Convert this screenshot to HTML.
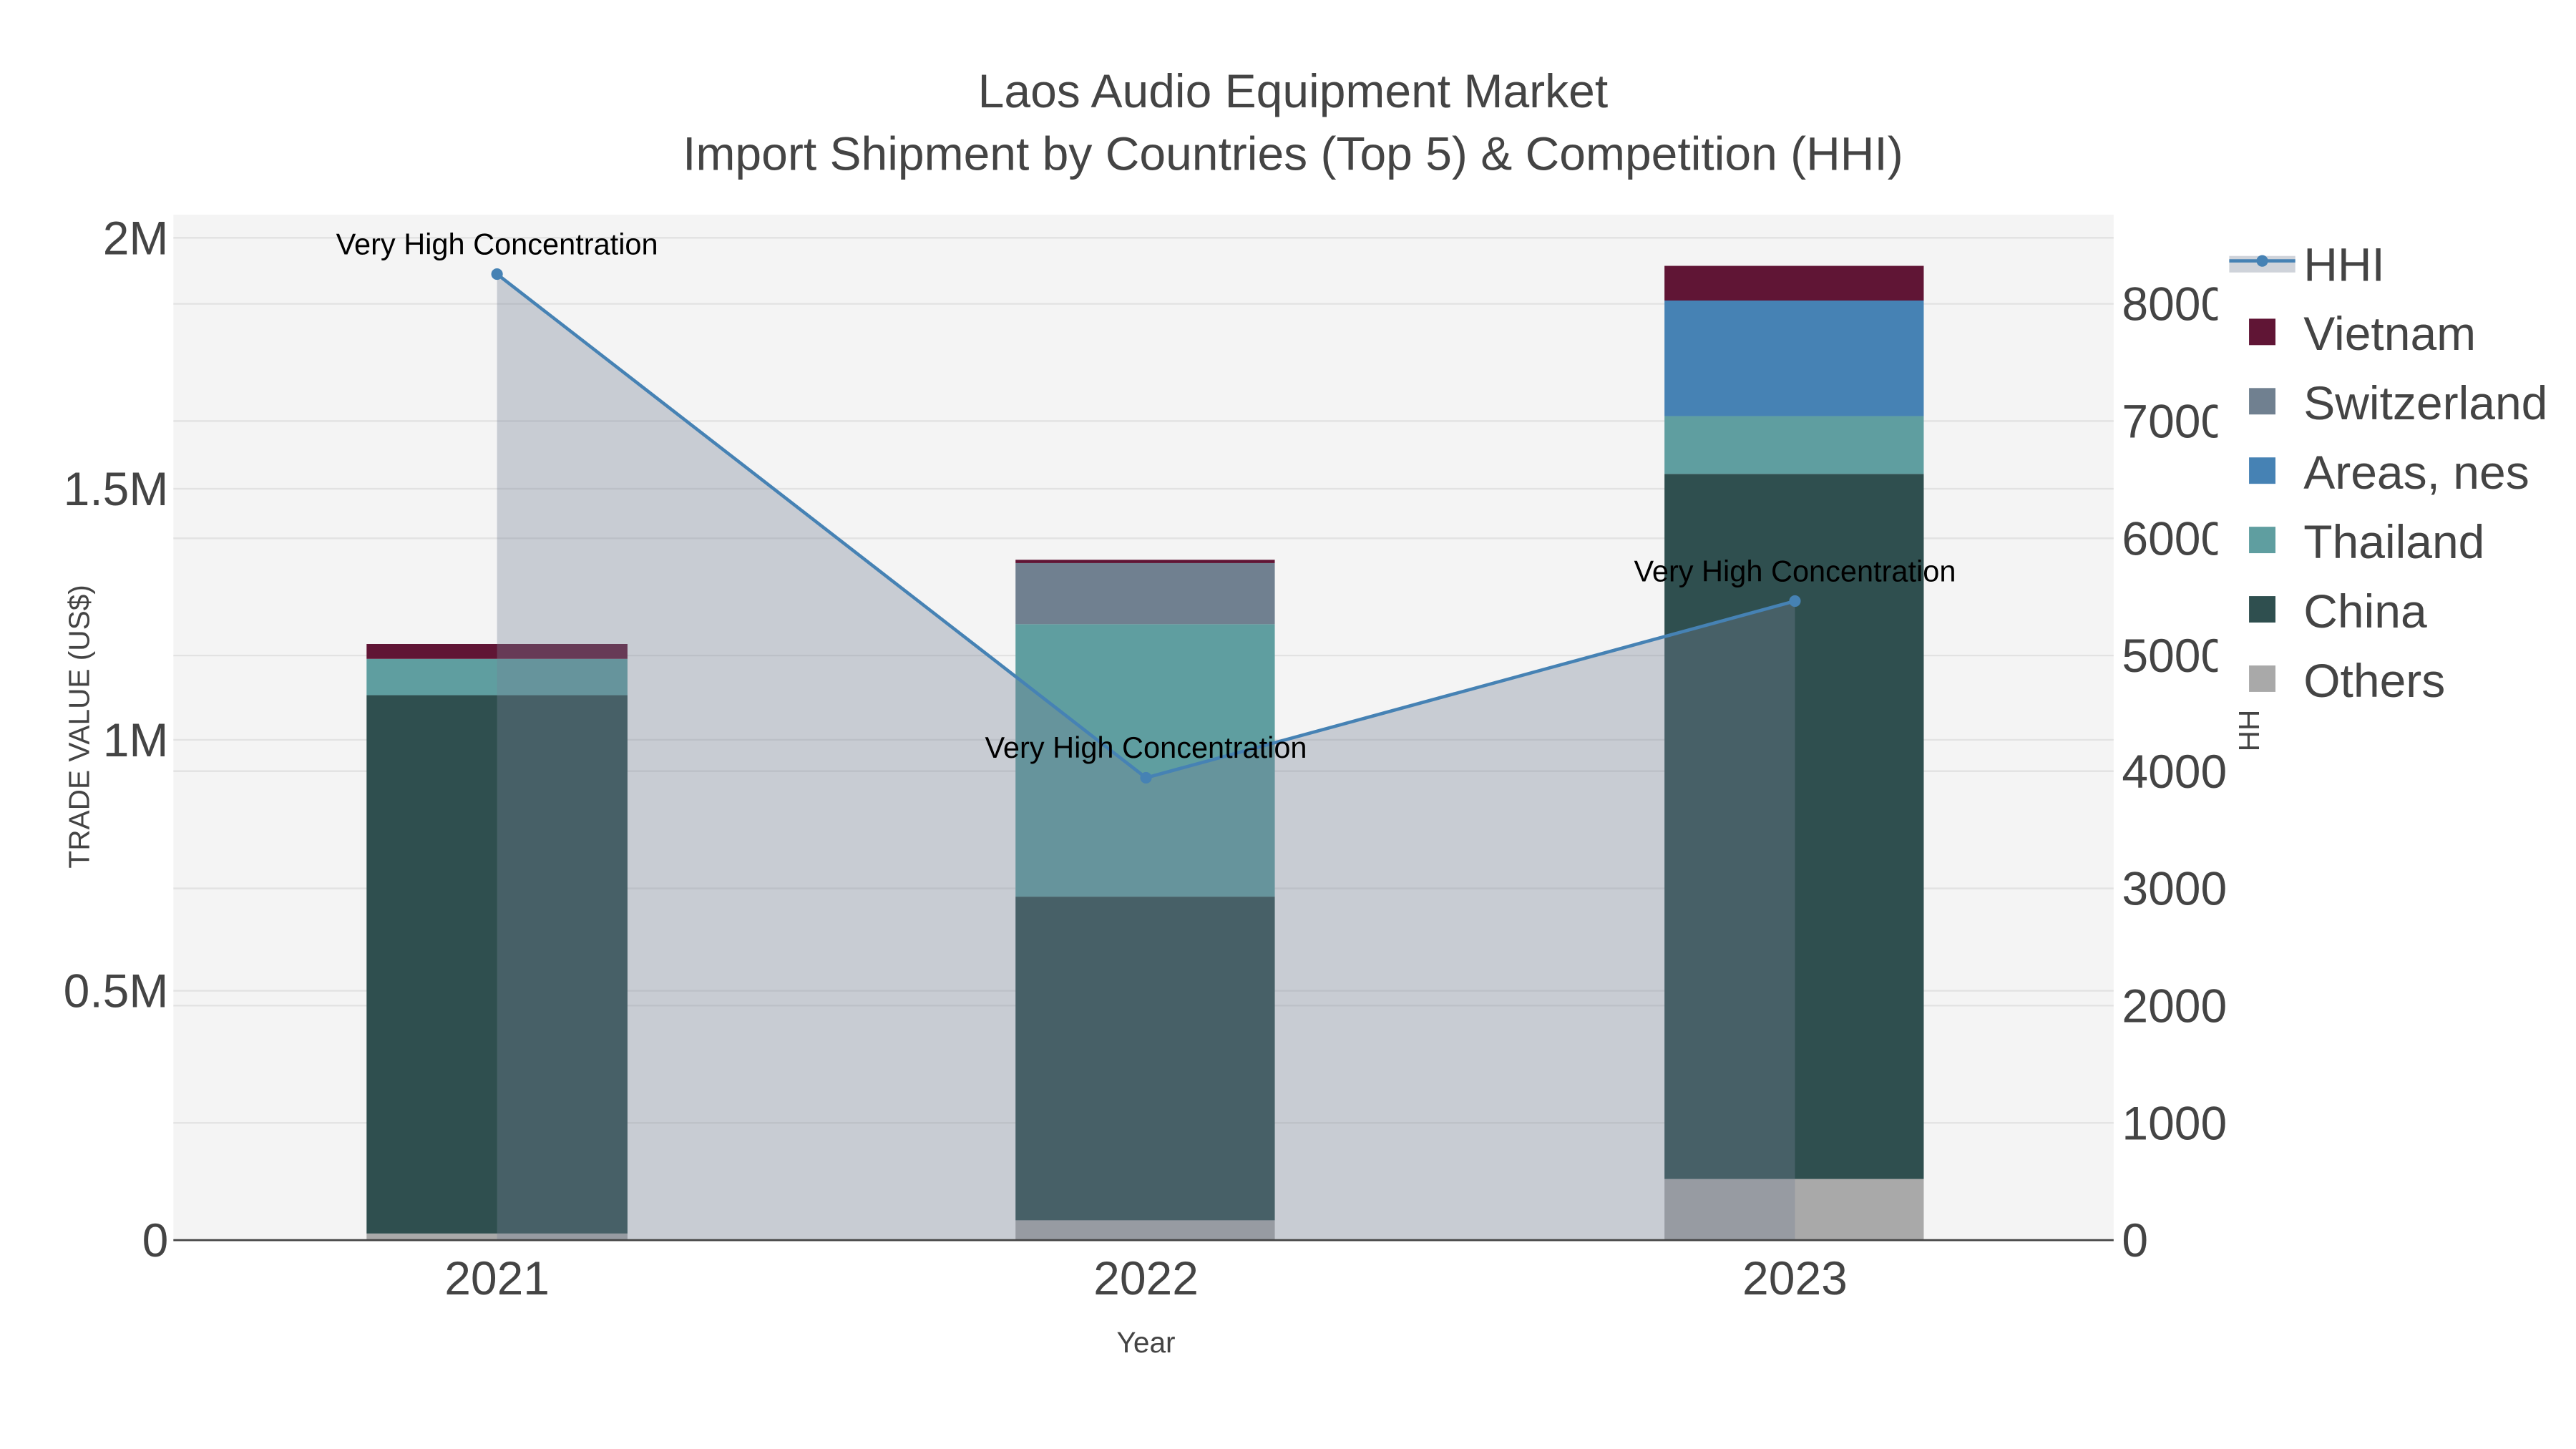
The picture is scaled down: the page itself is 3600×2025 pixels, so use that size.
<!DOCTYPE html>
<html><head><meta charset="utf-8"><style>
html,body{margin:0;padding:0;background:#fff;}
svg{display:block;}
text{font-family:"Liberation Sans",Arial,sans-serif;}
</style></head><body>
<svg width="3600" height="2025" viewBox="0 0 1560 877.5" preserveAspectRatio="none" xmlns="http://www.w3.org/2000/svg">
<rect width="1560" height="877.5" fill="#fff"/>
<rect x="105" y="130" width="1175" height="621" fill="#f4f4f4"/>
<g stroke="#e2e2e2" stroke-width="1">
<line x1="105" x2="1280" y1="144" y2="144"/><line x1="105" x2="1280" y1="296" y2="296"/>
<line x1="105" x2="1280" y1="448" y2="448"/><line x1="105" x2="1280" y1="600" y2="600"/>
<line x1="105" x2="1280" y1="184" y2="184"/><line x1="105" x2="1280" y1="255" y2="255"/>
<line x1="105" x2="1280" y1="326" y2="326"/><line x1="105" x2="1280" y1="397" y2="397"/>
<line x1="105" x2="1280" y1="467" y2="467"/><line x1="105" x2="1280" y1="538" y2="538"/>
<line x1="105" x2="1280" y1="609" y2="609"/><line x1="105" x2="1280" y1="680" y2="680"/>
</g>
<rect x="222" y="747" width="158" height="4" fill="#a9a9a9"/>
<rect x="222" y="421" width="158" height="326" fill="#2f4f4f"/>
<rect x="222" y="399" width="158" height="22" fill="#5f9ea0"/>
<rect x="222" y="390" width="158" height="9" fill="#601535"/>
<rect x="615" y="739" width="157" height="12" fill="#a9a9a9"/>
<rect x="615" y="543" width="157" height="196" fill="#2f4f4f"/>
<rect x="615" y="378" width="157" height="165" fill="#5f9ea0"/>
<rect x="615" y="341" width="157" height="37" fill="#708090"/>
<rect x="615" y="339" width="157" height="2" fill="#601535"/>
<rect x="1008" y="714" width="157" height="37" fill="#a9a9a9"/>
<rect x="1008" y="287" width="157" height="427" fill="#2f4f4f"/>
<rect x="1008" y="252" width="157" height="35" fill="#5f9ea0"/>
<rect x="1008" y="182" width="157" height="70" fill="#4682b4"/>
<rect x="1008" y="161" width="157" height="21" fill="#601535"/>
<polygon points="301,166 694,471 1087,364 1087,751 301,751" fill="rgb(118,128,150)" fill-opacity="0.35"/>
<line x1="105" x2="1280" y1="751" y2="751" stroke="#444" stroke-width="1.2"/>
<polyline points="301,166 694,471 1087,364" fill="none" stroke="#4682b4" stroke-width="2"/>
<circle cx="301" cy="166" r="3.5" fill="#4682b4"/><circle cx="694" cy="471" r="3.5" fill="#4682b4"/><circle cx="1087" cy="364" r="3.5" fill="#4682b4"/>
<g font-size="18" fill="#000" text-anchor="middle">
<text x="301" y="154">Very High Concentration</text>
<text x="694" y="459">Very High Concentration</text>
<text x="1087" y="352">Very High Concentration</text>
</g>
<g fill="#444" text-anchor="middle" font-size="28.6">
<text x="783" y="65">Laos Audio Equipment Market</text>
<text x="783" y="103">Import Shipment by Countries (Top 5) &amp; Competition (HHI)</text>
</g>
<g fill="#444" font-size="28.6" text-anchor="end">
<text x="102" y="154">2M</text><text x="102" y="306">1.5M</text><text x="102" y="458">1M</text>
<text x="102" y="610">0.5M</text><text x="102" y="761">0</text>
</g>
<g fill="#444" font-size="28.6" text-anchor="start">
<text x="1285" y="194">8000</text><text x="1285" y="265">7000</text><text x="1285" y="336">6000</text>
<text x="1285" y="407">5000</text><text x="1285" y="477">4000</text><text x="1285" y="548">3000</text>
<text x="1285" y="619">2000</text><text x="1285" y="690">1000</text><text x="1285" y="761">0</text>
</g>
<g fill="#444" font-size="28.6" text-anchor="middle">
<text x="301" y="784">2021</text><text x="694" y="784">2022</text><text x="1087" y="784">2023</text>
</g>
<text x="694" y="819" fill="#444" font-size="17.6" text-anchor="middle">Year</text>
<text transform="translate(54,440) rotate(-90)" fill="#444" font-size="17.6" text-anchor="middle">TRADE VALUE (US$)</text>
<text transform="translate(1368,440) rotate(-90)" fill="#444" font-size="17.6" text-anchor="middle">HHI</text>
<rect x="1343" y="140" width="217" height="290" fill="#fff"/>
<rect x="1350" y="155" width="40" height="10" fill="rgb(118,128,150)" fill-opacity="0.35"/>
<line x1="1350" x2="1390" y1="158" y2="158" stroke="#4682b4" stroke-width="2"/>
<circle cx="1370" cy="158" r="3.5" fill="#4682b4"/>
<rect x="1362" y="193" width="16" height="16" fill="#601535"/>
<rect x="1362" y="235" width="16" height="16" fill="#708090"/>
<rect x="1362" y="277" width="16" height="16" fill="#4682b4"/>
<rect x="1362" y="319" width="16" height="16" fill="#5f9ea0"/>
<rect x="1362" y="361" width="16" height="16" fill="#2f4f4f"/>
<rect x="1362" y="403" width="16" height="16" fill="#a9a9a9"/>
<g fill="#444" font-size="28.6">
<text x="1395" y="170">HHI</text><text x="1395" y="212">Vietnam</text><text x="1395" y="254">Switzerland</text>
<text x="1395" y="296">Areas, nes</text><text x="1395" y="338">Thailand</text><text x="1395" y="380">China</text>
<text x="1395" y="422">Others</text>
</g>
</svg>
</body></html>
